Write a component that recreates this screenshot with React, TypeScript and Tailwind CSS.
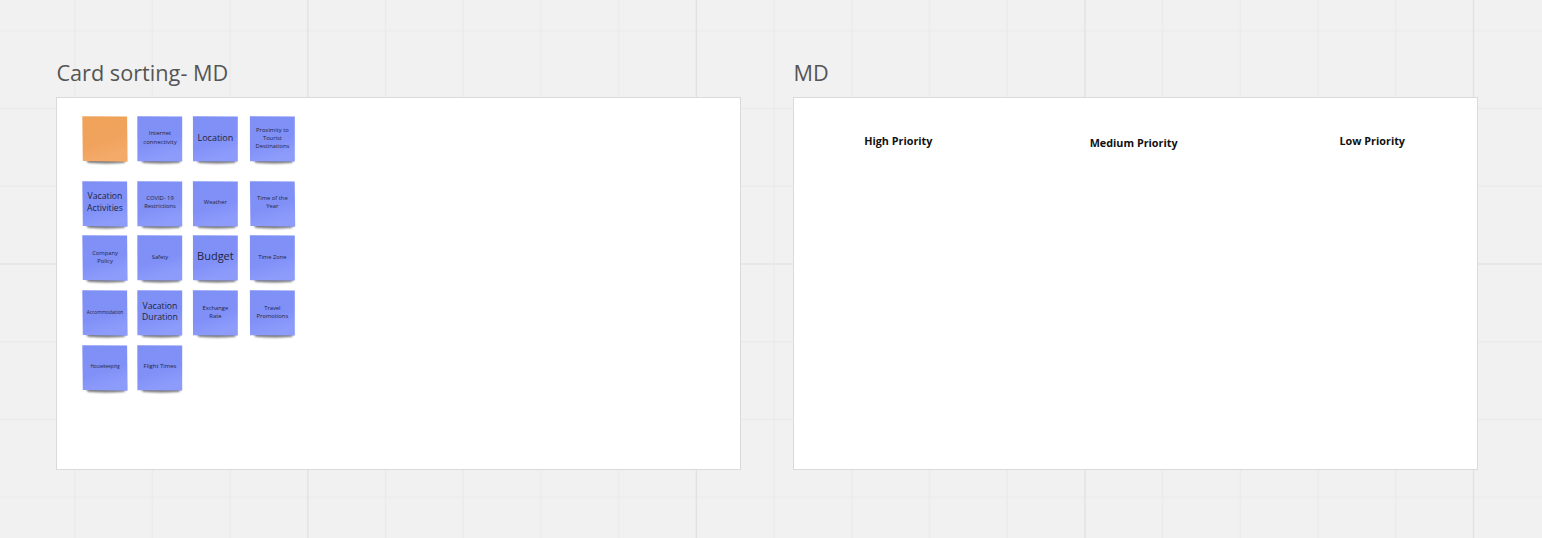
import type { ReactNode } from "react";

type Note = { lines: string[]; size: string; orange?: boolean; shape?: number };

const small = "text-[5.8px] leading-[8.2px] pb-[3.4px]";
const lower = "text-[5.8px] leading-[8.2px] pb-[2px]";
const notes: Note[] = [
  { lines: [], size: small, orange: true, shape: 1 },
  { lines: ["Internet", "connectivity"], size: "text-[6px] leading-[8.4px] pb-[2.4px]" },
  { lines: ["Location"], size: "text-[9px] leading-[12px] pb-[2px]" },
  { lines: ["Proximity to", "Tourist", "Destinations"], size: lower },
  { lines: ["Vacation", "Activities"], size: "text-[8.7px] leading-[11.6px] pb-[2px]", shape: 1 },
  { lines: ["COVID- 19", "Restrictions"], size: small },
  { lines: ["Weather"], size: small },
  { lines: ["Time of the", "Year"], size: small, shape: 1 },
  { lines: ["Company", "Policy"], size: lower, shape: 1 },
  { lines: ["Safety"], size: small },
  { lines: ["Budget"], size: "text-[11px] leading-[14px] pb-[5px]" },
  { lines: ["Time Zone"], size: small },
  { lines: ["Accommodation"], size: "text-[4.8px] leading-[8px] pb-[2px]", shape: 1 },
  { lines: ["Vacation", "Duration"], size: "text-[8.7px] leading-[11.6px] pb-[2px]" },
  { lines: ["Exchange", "Rate"], size: lower },
  { lines: ["Travel", "Promotions"], size: lower },
  { lines: ["Housekeeping"], size: "text-[4.4px] leading-[8px] pb-[3.4px]", shape: 1 },
  { lines: ["Flight Times"], size: "text-[5.9px] leading-[8px] pb-[3.4px]" },
];

const shapes = [
  "M0.3 0.2 L45.2 0.5 L45.2 45.5 L0.4 45.3 Z",
  "M0.3 0.2 L45.1 0.5 L45.6 45.7 L0.8 45 Z",
];

function StickyNote({ note, shift }: { note: Note; shift: number }) {
  return (
    <div className="grid h-[46px] w-[46px]">
      <svg className="col-start-1 row-start-1 overflow-visible" width="46" height="46" viewBox="0 0 46 46">
        <g transform={`translate(${shift} 0)`}>
          <path d="M3 42 L44 42 L42.5 46.8 Q25 48.4 6 46.8 Z" fill="#000" opacity="0.55" filter="url(#noteShadow)" />
          <path d={shapes[note.shape ?? 0]} fill={note.orange ? "url(#orangeFill)" : "url(#blueFill)"} />
        </g>
      </svg>
      <div
        className={`col-start-1 row-start-1 flex flex-col items-center justify-center whitespace-nowrap text-[#20253f] ${note.size}`}
      >
        {note.lines.map((line) => (
          <span key={line}>{line}</span>
        ))}
      </div>
    </div>
  );
}

function Frame({ title, children }: { title: string; children: ReactNode }) {
  return (
    <section className="flex w-[685px] flex-col">
      <h2 className="h-[41px] pl-[0.4px] text-[21.7px] leading-[33px] text-[#555]">{title}</h2>
      <div className="h-[373px] border border-[#dadada] bg-white">{children}</div>
    </section>
  );
}

const columns = Array.from({ length: 19 }, (_, i) => i);
const rows = Array.from({ length: 7 }, (_, i) => i);

function CanvasGrid() {
  return (
    <svg className="col-start-1 row-start-1" width="1542" height="538">
      <defs>
        <filter id="noteShadow" x="-20%" y="-100%" width="140%" height="400%">
          <feGaussianBlur stdDeviation="1.3" />
        </filter>
        <linearGradient id="blueFill" x1="0" y1="0" x2="0.3" y2="1">
          <stop offset="0" stopColor="#7f90f5" />
          <stop offset="0.65" stopColor="#8090f7" />
          <stop offset="1" stopColor="#8d9cfb" />
        </linearGradient>
        <linearGradient id="orangeFill" x1="0" y1="0" x2="0.3" y2="1">
          <stop offset="0" stopColor="#f0a25a" />
          <stop offset="0.65" stopColor="#f0a35d" />
          <stop offset="1" stopColor="#f4ab6a" />
        </linearGradient>
      </defs>
      {rows.map((i) => (
        <rect key={i} x="0" y={30.2 + i * 77.7} width="1542" height="1.4" fill={i === 3 ? "#e3e3e3" : "#ebebeb"} />
      ))}
      {columns.map((i) => (
        <rect key={i} x={74 + i * 77.71} y="0" width="1.4" height="538" fill={i % 5 === 3 ? "#e2e2e2" : "#ebebeb"} />
      ))}
    </svg>
  );
}

export default function App() {
  return (
    <main className="grid h-[538px] w-[1542px] overflow-hidden bg-[#f1f1f1] font-['Open_Sans','Noto_Sans',sans-serif]">
      <CanvasGrid />
      <div className="col-start-1 row-start-1 flex gap-[52px] pt-14 pl-14">
        <Frame title="Card sorting- MD">
          <div className="grid grid-cols-[55px_55.4px_57px_46px] grid-rows-[64.6px_54.8px_54.8px_54.6px_46px] pt-[18px] pl-[25px]">
            {notes.map((note, i) => (
              <StickyNote key={i} note={note} shift={i % 4 > 1 ? 0.6 : 0} />
            ))}
          </div>
        </Frame>
        <Frame title="MD">
          <div className="flex pt-[35px] pl-[70.2px] text-[10.8px] leading-4 font-bold text-[#111]">
            <span className="w-[225.5px]">High Priority</span>
            <span className="w-[249.8px] pt-0.5">Medium Priority</span>
            <span>Low Priority</span>
          </div>
        </Frame>
      </div>
    </main>
  );
}
